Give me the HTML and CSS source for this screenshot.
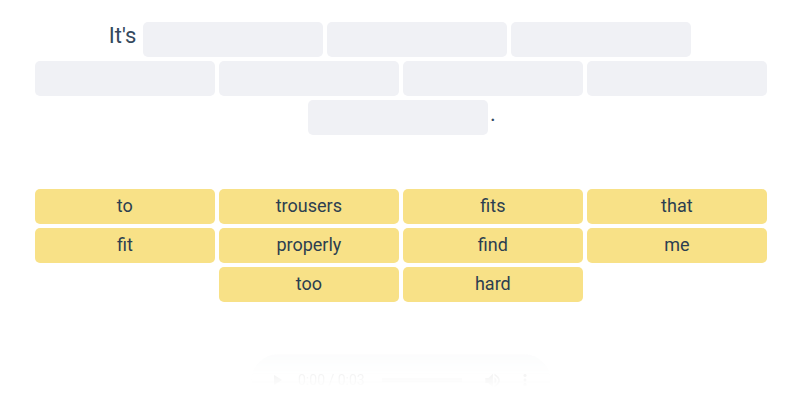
FILE: index.html
```html
<!DOCTYPE html>
<html lang="en">
<head>
    <meta charset="UTF-8">
    <meta name="viewport" content="width=device-width, initial-scale=1.0">
    <title>Word order</title>
    <link rel="stylesheet" href="styles.css">
</head>
<body>
    <div class="exercise">
        <div class="sentence">
            <div class="row">
                <span class="text">It's</span>
                <span class="slot"></span>
                <span class="slot"></span>
                <span class="slot"></span>
            </div>
            <div class="row">
                <span class="slot"></span>
                <span class="slot"></span>
                <span class="slot"></span>
                <span class="slot"></span>
            </div>
            <div class="row">
                <span class="slot"></span>
                <span class="dot">.</span>
            </div>
        </div>

        <div class="words">
            <button class="word">to</button>
            <button class="word">trousers</button>
            <button class="word">fits</button>
            <button class="word">that</button>
            <button class="word">fit</button>
            <button class="word">properly</button>
            <button class="word">find</button>
            <button class="word">me</button>
            <button class="word">too</button>
            <button class="word">hard</button>
        </div>

        <!-- Audio player, fading out -->
        <div class="player">
            <svg class="play" viewBox="0 0 10 12"><path d="M1 1v10l8-5z"/></svg>
            <span class="time">0:00 / 0:03</span>
            <span class="track"></span>
            <svg class="volume" viewBox="0 0 18 18"><path d="M1 6v6h4l5 5V1L5 6zM12 5v8q5-4 0-8zM12 1v2q9 6 0 12v2q13-8 0-16z"/></svg>
            <svg class="more" viewBox="0 0 4 16"><circle cx="2" cy="2" r="2"/><circle cx="2" cy="8" r="2"/><circle cx="2" cy="14" r="2"/></svg>
        </div>
    </div>
</body>
</html>
```

FILE: styles.css
```css
* {
    box-sizing: border-box;
}

body {
    margin: 0;
    height: 400px;
    overflow: hidden;
    background: #fff;
    color: #34495e;
    font-family: Roboto, sans-serif;
}

.exercise {
    width: 734px;
    margin: 0 auto;
    padding: 22px 0 0 2px;
}

.row,
.words {
    display: flex;
    flex-wrap: wrap;
    justify-content: center;
    gap: 4px;
}

.row {
    margin-bottom: 4px;
}

.text {
    height: 35px;
    margin-right: 3px;
    margin-left: -2px;
    font-size: 22px;
    line-height: 27px;
}

.slot {
    width: 180px;
    height: 35px;
    border-radius: 5px;
    background: #f0f1f5;
}

.dot {
    margin-left: -2px;
    margin-right: -2px;
    font-size: 22px;
    line-height: 27px;
}

.words {
    margin-top: 54px;
}

.word {
    width: 180px;
    height: 35px;
    padding: 0 0.3px 2px 0;
    border: none;
    border-radius: 5px;
    background: #f8e187;
    color: #2c3e50;
    font-family: inherit;
    font-size: 18px;
    cursor: pointer;
}

.player {
    display: flex;
    align-items: center;
    width: 300px;
    height: 54px;
    margin: 52px auto 0;
    padding: 0 0 2px 22px;
    border-radius: 27px;
    background: #f1f3f4;
    color: #000;
    font-size: 14px;
    opacity: 0.2;
    -webkit-mask-image: linear-gradient(#000, rgba(0, 0, 0, 0.25) 20px, transparent 34px);
    mask-image: linear-gradient(#000, rgba(0, 0, 0, 0.25) 20px, transparent 34px);
}

.play,
.more {
    height: 12px;
}

.play {
    width: 10px;
}

.time {
    margin-left: 15px;
}

.track {
    width: 80px;
    height: 4px;
    margin-left: 17px;
    background: #999;
}

.volume {
    width: 16px;
    height: 15px;
    margin-left: 22px;
}

.more {
    width: 4px;
    margin-left: 23px;
}
```
